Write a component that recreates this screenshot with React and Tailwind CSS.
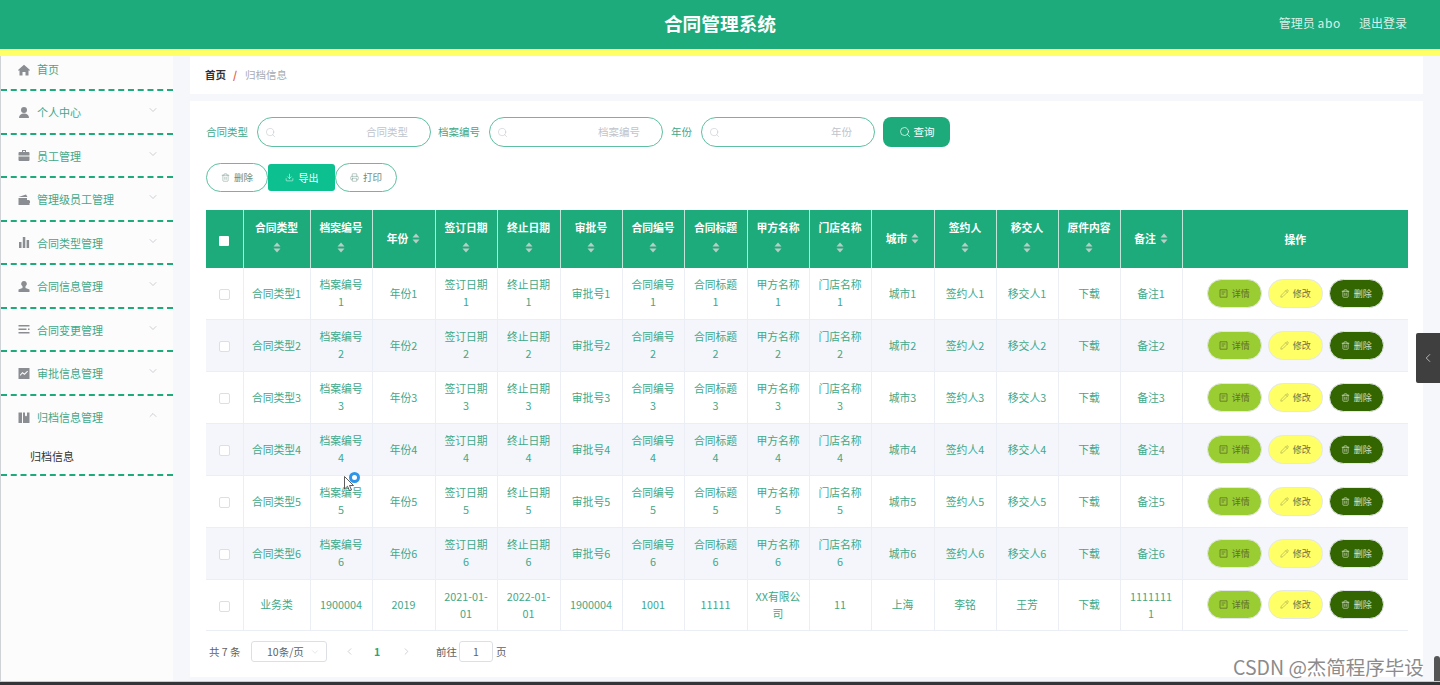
import { ChevronDown, ChevronUp, ChevronLeft, ChevronRight, Search, Trash2, Download, Printer, Pencil } from "lucide-react"

const menu = [
  { label: "个人中心", icon: "M6 1a3 3 0 1 1 0 6 3 3 0 0 1 0-6zM1 12c0-3 2-4.500 5-4.500s5 1.500 5 4.500z" },
  { label: "员工管理", icon: "M4 1h4v2h2.500a1 1 0 0 1 1 1v2.500h-11V4a1 1 0 0 1 1-1H4zM5 2v1h2V2zM.5 7.500h11V11a1 1 0 0 1-1 1h-9a1 1 0 0 1-1-1z" },
  { label: "管理级员工管理", icon: "M8 1.500 9.500 4H.5zM.5 5h8.500v2h2.500v5H.500zM9.500 8H12v2H9.500z" },
  { label: "合同类型管理", icon: "M1 6h2.500v6H1zM4.800 1h2.500v11H4.800zM8.600 4h2.500v8H8.600z" },
  { label: "合同信息管理", icon: "M6 1a2.800 2.800 0 0 1 1.500 5.200V8l4 1.500V12H.5V9.500l4-1.500V6.200A2.800 2.800 0 0 1 6 1z" },
  { label: "合同变更管理", icon: "M.5 2h11v1.500H.5zM.5 5.500h8V7h-8zM10 5.500h1.500V7H10zM.5 9h11v1.500H.5z" },
  { label: "审批信息管理", icon: "M.5 1h11v11H.5zM2 9l2.500-2.500 2 1.500L10 4.500 9.300 3.800 6.400 6.600l-2-1.500L2 7.700z" },
]

const headers = ["合同类型", "档案编号", "年份", "签订日期", "终止日期", "审批号", "合同编号", "合同标题", "甲方名称", "门店名称", "城市", "签约人", "移交人", "原件内容", "备注"]

const rows = [1, 2, 3, 4, 5, 6].map((n) => [
  `合同类型${n}`, `档案编号${n}`, `年份${n}`, `签订日期${n}`, `终止日期${n}`, `审批号${n}`, `合同编号${n}`,
  `合同标题${n}`, `甲方名称${n}`, `门店名称${n}`, `城市${n}`, `签约人${n}`, `移交人${n}`, "下载", `备注${n}`,
])
rows.push(["业务类", "1900004", "2019", "2021-01-01", "2022-01-01", "1900004", "1001", "11111", "XX有限公司", "11", "上海", "李铭", "王芳", "下载", "11111111"])

function SortCaret({ stacked }) {
  const icon = (
    <svg viewBox="0 0 8 11" className={`w-[8px] h-[11px] ${stacked ? "block" : "inline-block ml-[4px] align-[-1px]"}`}>
      <path d="M4 0.500 7.500 4.500H.5zM4 10.500.5 6.500h7z" fill="#b9cfc6" />
    </svg>
  )
  return stacked ? <span className="flex items-center justify-center h-[20px]">{icon}</span> : icon
}

function TicketIcon() {
  return (
    <svg viewBox="0 0 9 9" className="w-[9px] h-[9px]" fill="none" stroke="currentColor" strokeWidth="0.800">
      <path d="M1 .8h7v7.400H1zM2.600 3h3.800M2.600 5h2.400" />
    </svg>
  )
}

function SearchBox({ label, labelClass }) {
  return (
    <>
      <span className={`text-[10.500px] text-[#3fa888] ${labelClass}`}>{label}</span>
      <div className="flex items-center w-[174px] h-[30px] border border-[#5fbfa2] rounded-full pl-[7px] pr-[22px] bg-white">
        <Search size={11} strokeWidth={1.2} color="#c0c4cc" />
        <input placeholder={label} className="flex-1 min-w-0 text-right text-[10.500px] outline-none placeholder:text-[#c0c4cc]" />
      </div>
    </>
  )
}

function RowButton({ bg, text, icon, label }) {
  return (
    <button className={`flex items-center justify-center gap-[4px] w-[55px] h-[29px] shrink-0 whitespace-nowrap rounded-full border border-[#e4e7ed] text-[9px] ${bg} ${text}`}>
      {icon}
      {label}
    </button>
  )
}

export default function App() {
  return (
    <div className="h-[685px] w-[1440px] overflow-hidden flex flex-col relative bg-[#f5f7fa] font-['Noto_Sans_CJK_SC','Liberation_Sans',sans-serif]">
      <header className="h-[56px] shrink-0 bg-[#1dab7c] border-b-[7px] border-[#ffff66] flex items-center relative">
        <div className="flex-1 text-center pb-[2px] text-[18.700px] font-bold text-white">合同管理系统</div>
        <div className="absolute right-[33px] top-[14px] flex gap-[18px] text-[12px] text-[#d9f1e8]">
          <span>管理员 <span className="tracking-[0.7px]">abo</span></span>
          <span>退出登录</span>
        </div>
      </header>

      <div className="flex flex-1 min-h-0">
        <aside className="w-[173px] shrink-0 bg-[#fcfcfd] border-l border-[#cfd3d6] text-[11px] text-[#3fa888]">
          <div className="h-[35px] flex items-center pl-[17px] border-b-2 border-dashed border-[#1dab7c] pb-[6px]">
            <svg viewBox="0 0 12 12" className="w-[12px] h-[12px] mr-[7px]" fill="#8a8d91"><path d="M6 .8 12 6v.5h-1.500V11.500H7.500V8h-3v3.500H1.500V6.500H0V6z" /></svg>
            首页
          </div>
          {menu.map((m) => (
            <div key={m.label} className="h-[43.500px] flex items-center pl-[17px] pr-[14px] pt-[1px] border-b-2 border-dashed border-[#1dab7c]">
              <svg viewBox="0 0 12 13" className="w-[12px] h-[13px] mr-[7px]" fill="#8a8d91"><path d={m.icon} /></svg>
              <span className="flex-1">{m.label}</span>
              <ChevronDown size={12} strokeWidth={1} color="#9aa0a6" className="mb-[4px]" />
            </div>
          ))}
          <div className="h-[43.500px] flex items-center pl-[17px] pr-[14px]">
            <svg viewBox="0 0 12 13" className="w-[12px] h-[13px] mr-[7px]" fill="#8a8d91"><path d="M.5 1.500h3.500v10.500H.5zM5 1.500h2v4l1-1 1 1v-4h2.500v10.500H5z" /></svg>
            <span className="flex-1">归档信息管理</span>
            <ChevronUp size={12} strokeWidth={1} color="#9aa0a6" className="mb-[4px]" />
          </div>
          <div className="h-[37px] flex items-center pl-[29px] text-[#333333] border-b-2 border-dashed border-[#1dab7c]">归档信息</div>
        </aside>

        <main className="flex-1 min-w-0 pl-[17px] pr-[17px] flex flex-col gap-[7px]">
          <div className="h-[38px] shrink-0 bg-white flex items-center pl-[15px] text-[10.500px]">
            <span className="font-bold text-[#303133]">首页</span>
            <span className="ml-[7px] mr-[8px] font-bold text-[#e2603f]">/</span>
            <span className="text-[#a8abb2]">归档信息</span>
          </div>

          <section className="h-[576px] shrink-0 bg-white pt-[16px] pl-[16px] pr-[15px]">
            <div className="flex items-center h-[30px]">
              <SearchBox label="合同类型" labelClass="w-[51px]" />
              <span className="w-[7px]" />
              <SearchBox label="档案编号" labelClass="w-[51px]" />
              <span className="w-[8px]" />
              <SearchBox label="年份" labelClass="w-[30px]" />
              <button className="ml-[8px] flex items-center justify-center gap-[3px] w-[67px] h-[30px] rounded-[8px] bg-[#1dab7c] text-[10.500px] text-white">
                <Search size={12} strokeWidth={1.4} />
                查询
              </button>
            </div>

            <div className="flex items-center h-[29px] mt-[16px]">
              <button className="flex items-center justify-center gap-[4px] w-[62px] h-[29px] rounded-full border border-[#5fbfa2] text-[9.500px] text-[#6a8d80]">
                <Trash2 size={9} strokeWidth={1.2} />
                删除
              </button>
              <button className="flex items-center justify-center gap-[5px] w-[67px] h-[27px] rounded-[3px] bg-[#0cc08f] text-[10px] text-white">
                <Download size={9} strokeWidth={1.4} />
                导出
              </button>
              <button className="flex items-center justify-center gap-[4px] w-[62px] h-[29px] rounded-full border border-[#5fbfa2] text-[9.500px] text-[#6a8d80]">
                <Printer size={9} strokeWidth={1.2} />
                打印
              </button>
            </div>

            <table className="table-fixed w-[1202px] mt-[18px] border-collapse text-[10.800px] text-center">
              <colgroup>
                {[37, 67, 62, 63, 62, 63, 62, 62, 63, 62, 62, 63, 62, 62, 62, 62, 226].map((w, i) => (
                  <col key={i} style={{ width: w }} />
                ))}
              </colgroup>
              <thead>
                <tr className="h-[58px] bg-[#1dab7c] text-white font-bold leading-[20px]">
                  <th className="border-r border-[#bfe6d9]">
                    <span className="inline-block w-[10px] h-[10px] bg-white rounded-[1px] align-middle" />
                  </th>
                  {headers.map((h) => (
                    <th key={h} className={`border-r border-[#bfe6d9] px-[7px] font-bold break-all ${h.length > 2 ? "pb-[4px]" : "pb-[2px]"}`}>
                      {h}
                      <SortCaret stacked={h.length > 2} />
                    </th>
                  ))}
                  <th className="font-bold">操作</th>
                </tr>
              </thead>
              <tbody className="text-[#3fa888] leading-[17px]">
                {rows.map((row, i) => (
                  <tr key={i} className={`${i === 0 || i === 6 ? "h-[51px]" : "h-[52px]"} ${i % 2 === 1 ? "bg-[#f4f6fb]" : "bg-white"}`}>
                    <td className="border border-l-0 border-t-0 border-[#ebeef5]">
                      <span className="inline-block w-[11px] h-[11px] border border-[#dcdfe6] rounded-[2px] bg-white align-middle" />
                    </td>
                    {row.map((c, j) => (
                      <td key={j} className="border border-t-0 border-[#ebeef5] px-[7px] break-all">{c}</td>
                    ))}
                    <td className="border border-t-0 border-r-0 border-[#ebeef5]">
                      <div className="flex justify-center gap-[6px]">
                        <RowButton bg="bg-[#9acd32]" text="text-[#5f6f2c]" label="详情" icon={<TicketIcon />} />
                        <RowButton bg="bg-[#ffff66]" text="text-[#6f6f45]" label="修改" icon={<Pencil size={9} strokeWidth={1} />} />
                        <RowButton bg="bg-[#336600]" text="text-[#d5e0c8]" label="删除" icon={<Trash2 size={9} strokeWidth={1.4} color="#ffffff" />} />
                      </div>
                    </td>
                  </tr>
                ))}
              </tbody>
            </table>

            <div className="flex items-center h-[22px] mt-[10px] pl-[3px] text-[10.500px] text-[#606266]">
              <span className="w-[42px]">共 7 条</span>
              <div className="flex items-center justify-between w-[76px] h-[21px] border border-[#dcdfe6] rounded-[3px] pl-[15px] pr-[6px]">
                10条/页
                <ChevronDown size={10} strokeWidth={1} color="#c0c4cc" />
              </div>
              <ChevronLeft size={11} strokeWidth={1.2} color="#a8adb5" className="ml-[17px]" />
              <span className="ml-[17px] w-[10px] text-center font-bold text-[#1dab7c]">1</span>
              <ChevronRight size={11} strokeWidth={1.2} color="#a8adb5" className="ml-[19px]" />
              <span className="ml-[24px]">前往</span>
              <div className="flex items-center justify-center w-[34px] h-[21px] ml-[2px] mr-[3px] border border-[#dcdfe6] rounded-[3px]">1</div>
              <span>页</span>
            </div>
          </section>
        </main>
      </div>

      <div className="h-[4px] shrink-0 bg-[#333538] border-t border-[#c9ccd0]" />

      {/* overlays */}
      <div className="absolute left-[1416px] top-[333px] w-[24px] h-[50px] bg-[#3f3f3f] rounded-l-[2px] flex items-center justify-center">
        <ChevronLeft size={14} strokeWidth={1.2} color="#e8e8e8" />
      </div>
      <div className="absolute left-[1434px] top-[656px] w-[6px] h-[25px] bg-[#555555] rounded-t-[3px]" />
      <div className="absolute left-[1233px] top-[653px] text-[19.500px] leading-[28px] text-[#8b8b8b]">CSDN @杰简程序毕设</div>
      <div className="absolute left-[349px] top-[472px] w-[11px] h-[11px] rounded-full border-[3px] border-[#2f95e8] bg-white" />
      <svg viewBox="0 0 10 16" className="absolute left-[344px] top-[476px] w-[10px] h-[16px]">
        <path d="M.5.500v12.500l3-2.700 2 4.500 2-.9-2-4.400h4z" fill="#ffffff" stroke="#333333" strokeWidth="0.800" />
      </svg>
    </div>
  )
}
